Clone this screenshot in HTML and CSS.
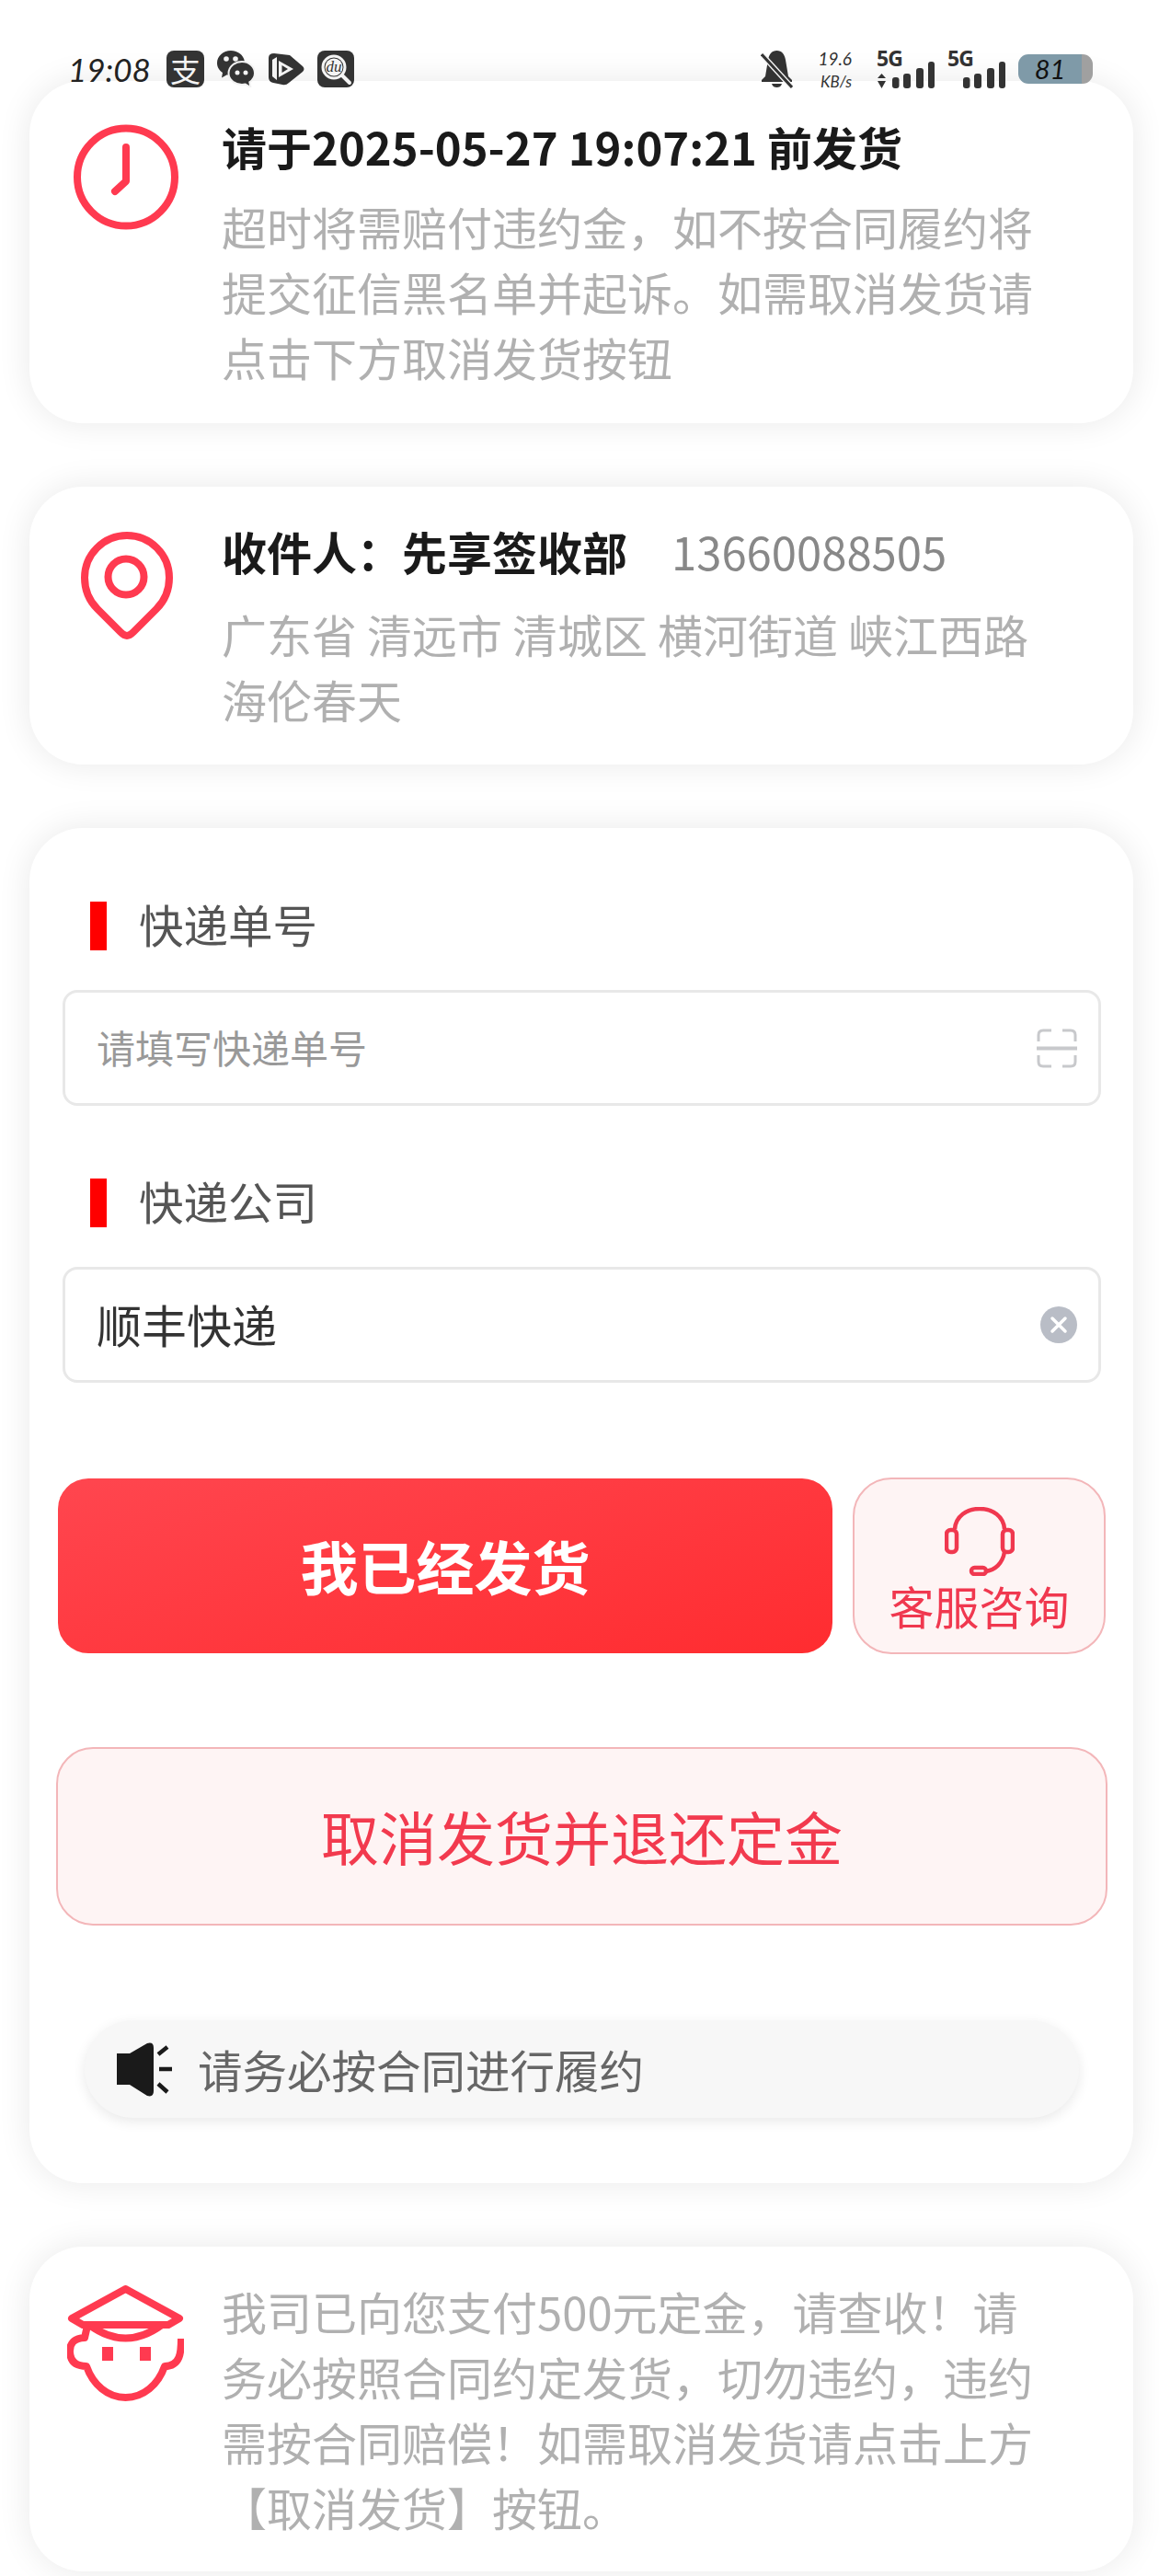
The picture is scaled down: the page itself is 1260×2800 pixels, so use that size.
FILE: index.html
```html
<!DOCTYPE html>
<html lang="zh-CN">
<head>
    <meta charset="UTF-8">
    <meta name="viewport" content="width=device-width, initial-scale=1.0">
    <title>发货</title>
    <link rel="stylesheet" href="styles.css">
</head>
<body>
    <!-- Status bar sits over the scrolled page -->
    <div class="status-bar">
        <div class="status-left">
            <span class="status-time">19:08</span>
            <span class="app-badge">支</span>
            <svg class="app-icon" width="41" height="40" viewBox="0 0 41 40">
                <path d="M15 0C6.7 0 0 5.900 0 13.500 0 18 2.400 21.600 6 24L5 29.500 10.800 26.300C12.200 26.700 13.600 27 15 27 23.300 27 30 21 30 13.500 30 5.900 23.300 0 15 0Z" fill="#333"/>
                <path d="M27 12C19 12 12.500 17.600 12.500 24.500 12.500 31.400 19 37 27 37 28.300 37 29.600 36.800 30.800 36.500L36.500 40 35.300 34.300C38.800 32 41 28.500 41 24.500 41 17.600 35 12 27 12Z" fill="#333" stroke="#f2f2f2" stroke-width="2"/>
                <circle cx="10" cy="9" r="2.800" fill="#f4f4f4"/>
                <circle cx="20" cy="9" r="2.800" fill="#f4f4f4"/>
                <circle cx="22" cy="24" r="2.500" fill="#f4f4f4"/>
                <circle cx="31" cy="24" r="2.500" fill="#f4f4f4"/>
            </svg>
            <svg class="app-icon" width="40" height="36" viewBox="0 0 40 36">
                <path d="M7 1 24 3 38 15Q41 18 38 21L23 33Q20 36 16 35L6 33Q1 32 1 27V6Q1 1 7 1Z" fill="#333"/>
                <path d="M10 5 5 8V26L10 30Z" fill="#f4f4f4"/>
                <path d="M12 9 28 18 12 27Z" fill="#f4f4f4"/>
                <path d="M15.500 14 22 18 15.500 22Z" fill="#333"/>
            </svg>
            <svg class="app-icon" width="40" height="40" viewBox="0 0 40 40">
                <rect width="40" height="40" rx="8" fill="#333"/>
                <circle cx="18" cy="18" r="12" fill="#333" stroke="#f4f4f4" stroke-width="3"/>
                <circle cx="18" cy="18" r="9.500" fill="#f4f4f4"/>
                <path d="M27 27 35 35" stroke="#f4f4f4" stroke-width="4" stroke-linecap="round"/>
                <text x="18" y="23" class="du-text">du</text>
            </svg>
        </div>
        <div class="status-right">
            <svg width="35" height="42" viewBox="0 0 35 42">
                <path d="M17.500 1C12 1 9 5 8 11L5 29 1 33V35H34V33L30 29 27 11C26 5 23 1 17.500 1Z" fill="#333"/>
                <path d="M12 37H23C22 40 20 41 17.500 41 15 41 13 40 12 37Z" fill="#333"/>
                <path d="M1 5 34 41" stroke="#f4f4f4" stroke-width="6"/>
                <path d="M1 5 34 41" stroke="#333" stroke-width="3"/>
            </svg>
            <div class="net-speed">
                <span class="net-speed-value">19.6</span>
                <span class="net-speed-unit">KB/s</span>
            </div>
            <div class="signal">
                <span class="signal-text">5G</span>
                <svg width="63" height="42" viewBox="0 0 63 42">
                    <path d="M5.500 26 10 31H1Z M1 34H10L5.500 42Z" fill="#333"/>
                    <rect x="17" y="30" width="7.500" height="12" rx="3" fill="#333"/>
                    <rect x="29" y="26" width="8" height="16" rx="3" fill="#333"/>
                    <rect x="43" y="20" width="8" height="22" rx="3" fill="#333"/>
                    <rect x="56" y="13" width="7" height="29" rx="3" fill="#333"/>
                </svg>
            </div>
            <div class="signal">
                <span class="signal-text">5G</span>
                <svg width="63" height="42" viewBox="0 0 63 42">
                    <rect x="17" y="30" width="7.500" height="12" rx="3" fill="#333"/>
                    <rect x="29" y="26" width="8" height="16" rx="3" fill="#333"/>
                    <rect x="43" y="20" width="8" height="22" rx="3" fill="#333"/>
                    <rect x="56" y="13" width="7" height="29" rx="3" fill="#333"/>
                </svg>
            </div>
            <div class="battery"><span class="battery-level">81</span></div>
        </div>
    </div>

    <div class="page">
        <!-- Deadline -->
        <div class="card card-info card-deadline">
            <svg class="info-icon" width="114" height="115" viewBox="0 0 114 115" fill="none" stroke="#ff3a50">
                <circle cx="57" cy="57.500" r="53" stroke-width="8"/>
                <path d="M57 25V62L45 73" stroke-width="8" stroke-linecap="round" stroke-linejoin="round"/>
            </svg>
            <div class="info-text">
                <div class="info-title">请于2025-05-27 19:07:21 前发货</div>
                <div class="info-desc">超时将需赔付违约金，如不按合同履约将提交征信黑名单并起诉。如需取消发货请点击下方取消发货按钮</div>
            </div>
        </div>

        <!-- Receiver -->
        <div class="card card-info card-address">
            <svg class="info-icon icon-pin" width="100" height="117" viewBox="0 0 100 117" fill="none" stroke="#ff3a50" stroke-width="8">
                <path d="M50 113C47 113 45 111 43 109L18 84C9 75 4 63 4 50A46 46 0 0 1 96 50C96 63 91 75 82 84L57 109C55 111 53 113 50 113Z" stroke-linejoin="round"/>
                <circle cx="49" cy="49" r="19.500"/>
            </svg>
            <div class="info-text">
                <div class="info-title">收件人：先享签收部<span class="info-phone">13660088505</span></div>
                <div class="info-desc">广东省 清远市 清城区 横河街道 峡江西路 海伦春天</div>
            </div>
        </div>

        <!-- Shipping form -->
        <div class="card card-form">
            <div class="field">
                <div class="field-label"><span class="field-label-text">快递单号</span></div>
                <div class="field-input">
                    <span class="field-placeholder">请填写快递单号</span>
                    <svg width="44" height="43" viewBox="0 0 44 43" fill="none" stroke="#c8c9cc" stroke-width="3">
                        <path d="M2 14V7Q2 2 7 2H16M28 2H37Q42 2 42 7V14M2 29V36Q2 41 7 41H16M28 41H37Q42 41 42 36V29"/>
                        <path d="M0 21.500H44" stroke-width="4"/>
                    </svg>
                </div>
            </div>
            <div class="field">
                <div class="field-label"><span class="field-label-text">快递公司</span></div>
                <div class="field-input">
                    <span class="field-value">顺丰快递</span>
                    <svg width="40" height="40" viewBox="0 0 40 40">
                        <circle cx="20" cy="20" r="20" fill="#b9bdc6"/>
                        <path d="M13 13 27 27M27 13 13 27" stroke="#fff" stroke-width="3.500" stroke-linecap="round"/>
                    </svg>
                </div>
            </div>

            <div class="actions">
                <button class="btn-ship">我已经发货</button>
                <button class="btn-service">
                    <svg width="76" height="75" viewBox="0 0 76 75" fill="none" stroke="#f0384f" stroke-width="4.500">
                        <path d="M11 24C12 10 24 2 38 2 52 2 64 10 65 24"/>
                        <rect x="2" y="25" width="11" height="24" rx="4.500"/>
                        <rect x="63" y="25" width="11" height="24" rx="4.500"/>
                        <path d="M65 49C63 61 55 69 44 70"/>
                        <rect x="29" y="66" width="16" height="7" rx="3.500"/>
                    </svg>
                    <span>客服咨询</span>
                </button>
            </div>

            <button class="btn-cancel">取消发货并退还定金</button>

            <div class="notice">
                <svg width="60" height="59" viewBox="0 0 60 59">
                    <path d="M0 12H14L33 1Q40 -1 40 6V53Q40 60 33 58L14 46H0Z" fill="#1a1a1a"/>
                    <path d="M45 13 55 5M46 29H60M45 45 55 54" stroke="#1a1a1a" stroke-width="4.500" fill="none"/>
                </svg>
                <span>请务必按合同进行履约</span>
            </div>
        </div>

        <!-- Deposit note -->
        <div class="card card-info card-deposit">
            <svg class="info-icon icon-police" width="127" height="126" viewBox="0 0 127 126" fill="none" stroke="#ff3a50" stroke-width="8" stroke-linejoin="round">
                <path d="M63.500 4 122 36 110 43H17L5 36Z"/>
                <path d="M24 43Q63.500 72 103 43"/>
                <path d="M22 44 19 57Q2 58 3 73 4 88 21 88C28 108 44 122 63.500 122 83 122 99 108 106 88 123 88 124 73 124 58 108 57L105 44"/>
                <rect x="38" y="67" width="12" height="15" fill="#ff3a50" stroke="none"/>
                <rect x="79" y="67" width="12" height="15" fill="#ff3a50" stroke="none"/>
            </svg>
            <div class="info-text">
                <div class="info-desc">我司已向您支付500元定金，请查收！请务必按照合同约定发货，切勿违约，违约需按合同赔偿！如需取消发货请点击上方【取消发货】按钮。</div>
            </div>
        </div>
    </div>
</body>
</html>
```

FILE: styles.css
```css
/* Base */
html, body {
    margin: 0;
    padding: 0;
    background: #fff;
    font-family: "Noto Sans CJK SC", "Noto Sans", sans-serif;
}

body {
    position: relative;
    height: 2800px;
    overflow: hidden;
}

.page {
    display: flex;
    flex-direction: column;
    gap: 69px;
    padding: 88px 28px 0 32px;
}

/* Status bar */
.status-bar {
    position: absolute;
    top: 54px;
    left: 74px;
    right: 72px;
    height: 42px;
    z-index: 2;
    display: flex;
    align-items: center;
    justify-content: space-between;
    color: #333;
}

.status-left,
.status-right {
    display: flex;
    align-items: center;
    gap: 14px;
}

.status-time {
    width: 93px;
    font-family: "Lato", sans-serif;
    font-style: italic;
    font-size: 35px;
    line-height: 42px;
    color: #222;
}

.app-badge {
    width: 41px;
    height: 40px;
    border-radius: 8px;
    background: #333;
    color: #f4f4f4;
    font-size: 33px;
    line-height: 40px;
    text-align: center;
}

.du-text {
    font-family: "Liberation Serif", serif;
    font-style: italic;
    font-size: 17px;
    fill: #333;
    text-anchor: middle;
}

.net-speed {
    display: flex;
    flex-direction: column;
    justify-content: space-between;
    width: 37px;
    height: 42px;
    margin: 0 13px;
    font-family: "Lato", sans-serif;
    font-style: italic;
    text-align: right;
}

.net-speed-value {
    font-size: 19px;
    line-height: 20px;
}

.net-speed-unit {
    font-size: 17px;
    line-height: 15px;
    white-space: nowrap;
}

.signal {
    position: relative;
    width: 63px;
    height: 42px;
}

.signal-text {
    position: absolute;
    top: -4px;
    left: 0;
    font-family: "Noto Sans", sans-serif;
    font-weight: 700;
    font-size: 23px;
    line-height: 26px;
    letter-spacing: -1px;
    color: #333;
}

.battery {
    width: 81px;
    height: 32px;
    border-radius: 11px;
    background: linear-gradient(to right, #7f9aa8 0, #7f9aa8 69px, #a0a0a0 69px);
    text-align: center;
}

.battery-level {
    display: block;
    width: 69px;
    font-family: "Lato", sans-serif;
    font-style: italic;
    font-size: 29px;
    line-height: 32px;
    color: #111;
}

/* Cards */
.card {
    background: #fff;
    border-radius: 58px;
    box-shadow: 0 0 36px rgba(0, 0, 0, 0.09);
}

.card-info {
    display: flex;
    align-items: flex-start;
    box-sizing: border-box;
    padding-left: 48px;
    padding-right: 102px;
}

.card-deadline {
    height: 372px;
    padding-top: 35px;
}

.card-address {
    height: 302px;
    padding-top: 34px;
}

.card-deposit {
    height: 353px;
    padding-top: 34px;
}

.info-icon {
    flex-shrink: 0;
    margin-top: 12px;
    margin-right: 47px;
}

.icon-pin {
    margin-top: 15px;
    margin-left: 8px;
    margin-right: 53px;
}

.icon-police {
    margin-top: 8px;
    margin-left: -7px;
    margin-right: 41px;
}

.info-text {
    flex: 1;
    min-width: 0;
}

.info-title {
    font-size: 49px;
    font-weight: 700;
    line-height: 71px;
    color: #1a1a1a;
    margin-bottom: 16px;
}

.info-phone {
    margin-left: 48px;
    font-weight: 400;
    color: #888;
}

.info-desc {
    font-size: 49px;
    line-height: 71px;
    color: #b0b0b0;
}

.card-address .info-title {
    margin-bottom: 19px;
}

/* Form */
.card-form {
    padding: 71px 0 71px;
}

.field {
    margin: 0 35px 70px 36px;
}

.field:nth-child(2) {
    margin-bottom: 0;
}

.field-label {
    display: flex;
    align-items: center;
    gap: 35px;
    height: 71px;
    margin: 0 0 34px 30px;
    font-size: 48.500px;
    color: #555;
}

.field-label::before {
    content: "";
    width: 18px;
    height: 53px;
    background: #f00;
}

.field-label-text {
    line-height: 67px;
    margin-bottom: 4px;
}

.field-input {
    display: flex;
    align-items: center;
    justify-content: space-between;
    height: 126px;
    box-sizing: border-box;
    padding: 0 23px 0 34px;
    border: 3px solid #e8e8e8;
    border-radius: 16px;
}

.field-placeholder {
    margin-bottom: 4px;
    font-size: 42px;
    color: #999;
}

.field-value {
    margin-bottom: 4px;
    font-size: 49px;
    color: #333;
}

/* Buttons */
button {
    font-family: inherit;
    cursor: pointer;
}

.actions {
    display: flex;
    align-items: flex-start;
    gap: 22px;
    height: 192px;
    margin: 103px 30px 0 31px;
}

.btn-ship {
    flex: 1;
    height: 190px;
    margin-top: 1px;
    padding: 0 0 4px;
    border: none;
    border-radius: 33px;
    background: linear-gradient(165deg, #ff464f, #ff2c30);
    color: #fff;
    font-size: 63px;
    font-weight: 700;
}

.btn-service {
    width: 275px;
    height: 192px;
    display: flex;
    flex-direction: column;
    align-items: center;
    padding: 30px 0 0;
    border: 2px solid #f3b6b9;
    border-radius: 42px;
    background: #fef4f4;
    color: #f0384f;
    font-size: 49px;
    line-height: 64px;
}

.btn-cancel {
    display: block;
    width: 1143px;
    height: 194px;
    margin: 101px 0 0 29px;
    padding: 0 0 4px;
    border: 2px solid #f3b6b9;
    border-radius: 40px;
    background: #fef4f4;
    color: #f23a4e;
    font-size: 63px;
}

.notice {
    display: flex;
    align-items: center;
    gap: 28px;
    height: 106px;
    margin: 103px 59px 0 60px;
    padding-left: 35px;
    border-radius: 53px;
    background: #f7f7f7;
    box-shadow: 0 4px 14px rgba(0, 0, 0, 0.09);
    font-size: 48.500px;
    color: #666;
}
```
